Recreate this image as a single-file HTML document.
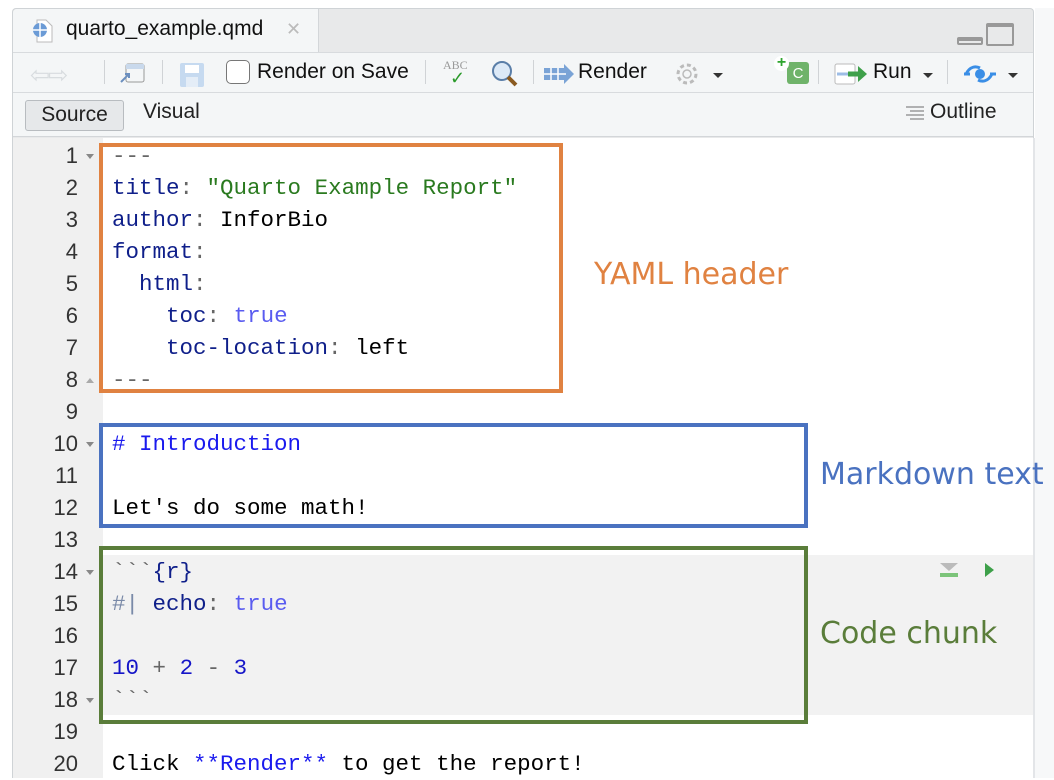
<!DOCTYPE html>
<html><head><meta charset="utf-8"><style>
*{margin:0;padding:0;box-sizing:border-box}
body{width:1054px;height:778px;position:relative;background:#fff;overflow:hidden;font-family:"Liberation Sans",sans-serif}
.a{position:absolute}
.code{position:absolute;left:112px;font-family:"Liberation Mono",monospace;font-size:22.5px;line-height:32px;white-space:pre;color:#000}
.ln{position:absolute;left:20px;width:58px;text-align:right;font-family:"Liberation Sans",sans-serif;font-size:22px;line-height:32px;color:#333}
.k{color:#0f1f8a}.s{color:#2a7a1f}.b{color:#5a5cf0}.h{color:#1a1aee}.g{color:#666}.n{color:#1515c8}
.tb{font-size:21px;color:#111;position:absolute;top:60px}
.sep{position:absolute;top:60px;width:1px;height:24px;background:#d0d3d6}
.fold{position:absolute;left:86px;width:0;height:0;border-left:4px solid transparent;border-right:4px solid transparent;border-top:5px solid #888}
</style></head><body>
<div class="a" style="left:12px;top:8px;width:1022px;height:770px;border:1px solid #cfd3d6;border-bottom:none;background:#e8e9ea;border-radius:4px 4px 0 0"></div>
<div class="a" style="left:13px;top:9px;width:306px;height:44px;background:#f4f6f7;border-right:1px solid #d3d6d9;border-radius:4px 0 0 0"></div>
<svg class="a" style="left:29px;top:18px" width="28" height="26"><path d="M8 2h9l6 6v16H8z" fill="#fff" stroke="#bbb"/><circle cx="11" cy="12" r="7" fill="#6b9bd6"/><path d="M4 12h14M11 5v14" stroke="#fff" stroke-width="1.5"/></svg>
<div class="a" style="left:66px;top:17px;font-size:21px;color:#111">quarto_example.qmd</div>
<div class="a" style="left:286px;top:19px;font-size:18px;color:#bbb">✕</div>
<div class="a" style="left:957px;top:37px;width:26px;height:8px;border:2px solid #999;border-top-width:4px;border-radius:2px"></div>
<div class="a" style="left:986px;top:23px;width:28px;height:23px;border:2px solid #999;border-top-width:4px;border-radius:2px"></div>
<div class="a" style="left:13px;top:52px;width:1020px;height:41px;background:#f4f6f7;border-top:1px solid #d8dbde;border-bottom:1px solid #d8dbde"></div>
<div class="a" style="left:30px;top:61px;font-size:24px;color:#d8dcdf;letter-spacing:-2px">⇦⇨</div>
<div class="sep" style="left:104px"></div>
<svg class="a" style="left:117px;top:62px" width="30" height="24"><rect x="9" y="2" width="18" height="18" rx="2" fill="#f4f6f7" stroke="#999"/><rect x="9" y="2" width="18" height="5" fill="#c9d9ec"/><path d="M4 20l8-8M8 12h4v4" stroke="#6b8fbf" stroke-width="2" fill="none"/></svg>
<div class="sep" style="left:162px"></div>
<svg class="a" style="left:178px;top:61px" width="28" height="28"><rect x="2" y="2" width="24" height="24" rx="2" fill="#c6daf0"/><rect x="7" y="4" width="14" height="8" fill="#fff"/><rect x="8" y="16" width="12" height="10" fill="#e4edf7"/></svg>
<div class="a" style="left:226px;top:60px;width:24px;height:24px;border:1.5px solid #777;border-radius:5px;background:#fff"></div>
<div class="tb" style="left:257px">Render on Save</div>
<div class="sep" style="left:425px"></div>
<div class="a" style="left:443px;top:58px;font-family:'Liberation Serif',serif;font-size:12px;color:#999">ABC</div>
<div class="a" style="left:450px;top:68px;font-size:18px;color:#2a9a2a">✓</div>
<svg class="a" style="left:490px;top:59px" width="30" height="30"><circle cx="12" cy="12" r="9" fill="#dce9f7" stroke="#5a7ea8" stroke-width="2"/><path d="M18 18l8 8" stroke="#8a5a20" stroke-width="4"/></svg>
<div class="sep" style="left:533px"></div>
<svg class="a" style="left:544px;top:62px" width="32" height="24"><rect x="0" y="6" width="22" height="12" fill="#7aa3d6"/><path d="M20 2l10 10-10 10z" fill="#7aa3d6"/><path d="M7 6v12M14 6v12M0 12h22" stroke="#fff" stroke-width="1.5"/></svg>
<div class="tb" style="left:578px">Render</div>
<svg class="a" style="left:673px;top:60px" width="28" height="28"><circle cx="14" cy="14" r="9" fill="none" stroke="#bbb" stroke-width="3" stroke-dasharray="4 3"/><circle cx="14" cy="14" r="4" fill="none" stroke="#bbb" stroke-width="1.5"/></svg>
<div class="a" style="left:713px;top:73px;border-left:5px solid transparent;border-right:5px solid transparent;border-top:5px solid #333"></div>
<div class="a" style="left:787px;top:62px;width:22px;height:22px;background:#6fb36a;border-radius:3px;color:#fff;font-size:15px;text-align:center;line-height:24px">C</div>
<div class="a" style="left:774px;top:56px;width:15px;height:15px;background:#fff;border-radius:50%;color:#2fa52f;font-weight:bold;font-size:16px;line-height:14px;text-align:center">+</div>
<div class="sep" style="left:818px"></div>
<svg class="a" style="left:834px;top:62px" width="38" height="24"><rect x="1" y="2" width="20" height="20" rx="2" fill="#fff" stroke="#bbb"/><path d="M3 12h14" stroke="#9dbde6" stroke-width="3"/><path d="M14 12h12" stroke="#3ea04a" stroke-width="5"/><path d="M24 4l9 8-9 8z" fill="#3ea04a"/></svg>
<div class="tb" style="left:873px">Run</div>
<div class="a" style="left:923px;top:73px;border-left:5px solid transparent;border-right:5px solid transparent;border-top:5px solid #333"></div>
<div class="sep" style="left:947px"></div>
<svg class="a" style="left:962px;top:62px" width="40" height="24"><path d="M4 12c4-8 10-8 14-6M30 12c-4 8-10 8-14 6" stroke="#3a8ee6" stroke-width="3" fill="none"/><circle cx="18" cy="12" r="5" fill="#3a8ee6"/><path d="M2 12h6M28 12h6" stroke="#3a8ee6" stroke-width="3"/></svg>
<div class="a" style="left:1008px;top:73px;border-left:5px solid transparent;border-right:5px solid transparent;border-top:5px solid #333"></div>
<div class="a" style="left:13px;top:93px;width:1020px;height:44px;background:#f4f6f7;border-bottom:1px solid #d3d6d9"></div>
<div class="a" style="left:25px;top:100px;width:99px;height:31px;background:#e6e8ea;border:1px solid #b8bcc0;border-radius:3px;font-size:21px;color:#222;text-align:center;line-height:27px">Source</div>
<div class="a" style="left:143px;top:100px;font-size:21px;color:#222">Visual</div>
<svg class="a" style="left:903px;top:104px" width="22" height="18"><path d="M3 3h18M7 7h14M3 11h18M7 15h14" stroke="#888" stroke-width="1.3"/></svg>
<div class="a" style="left:930px;top:100px;font-size:21px;color:#222">Outline</div>
<div class="a" style="left:13px;top:138px;width:1020px;height:640px;background:#fff"></div>
<div class="a" style="left:13px;top:138px;width:90px;height:640px;background:#f0f0f0"></div>
<div class="a" style="left:103px;top:555px;width:930px;height:160px;background:#f2f2f2"></div>
<div class="a" style="left:1033px;top:138px;width:2px;height:640px;background:#e3e5e8"></div>
<div class="a" style="left:1035px;top:8px;width:19px;height:770px;background:#f7f8f9"></div>

<div class="ln" style="top:140px">1</div><div class="ln" style="top:172px">2</div><div class="ln" style="top:204px">3</div><div class="ln" style="top:236px">4</div><div class="ln" style="top:268px">5</div><div class="ln" style="top:300px">6</div><div class="ln" style="top:332px">7</div><div class="ln" style="top:364px">8</div><div class="ln" style="top:396px">9</div><div class="ln" style="top:428px">10</div><div class="ln" style="top:460px">11</div><div class="ln" style="top:492px">12</div><div class="ln" style="top:524px">13</div><div class="ln" style="top:556px">14</div><div class="ln" style="top:588px">15</div><div class="ln" style="top:620px">16</div><div class="ln" style="top:652px">17</div><div class="ln" style="top:684px">18</div><div class="ln" style="top:716px">19</div><div class="ln" style="top:748px">20</div>
<div class="fold" style="top:154px"></div><div class="fold" style="top:378px;border-top:none;border-bottom:5px solid #aaa"></div><div class="fold" style="top:442px"></div><div class="fold" style="top:570px"></div><div class="fold" style="top:698px"></div>

<div class="code" style="top:140px"><span class="g">---</span></div>
<div class="code" style="top:172px"><span class="k">title</span><span class="g">:</span> <span class="s">"Quarto Example Report"</span></div>
<div class="code" style="top:204px"><span class="k">author</span><span class="g">:</span> InforBio</div>
<div class="code" style="top:236px"><span class="k">format</span><span class="g">:</span></div>
<div class="code" style="top:268px">  <span class="k">html</span><span class="g">:</span></div>
<div class="code" style="top:300px">    <span class="k">toc</span><span class="g">:</span> <span class="b">true</span></div>
<div class="code" style="top:332px">    <span class="k">toc-location</span><span class="g">:</span> left</div>
<div class="code" style="top:364px"><span class="g">---</span></div>
<div class="code" style="top:428px"><span class="h"># Introduction</span></div>
<div class="code" style="top:492px">Let's do some math!</div>
<div class="code" style="top:556px"><span class="g">&#96;&#96;&#96;</span><span class="k">{r}</span></div>
<div class="code" style="top:588px"><span style="color:#7a8aa8">#|</span> <span class="k">echo</span><span class="g">:</span> <span class="b">true</span></div>
<div class="code" style="top:652px"><span class="n">10</span> <span class="g">+</span> <span class="n">2</span> <span class="g">-</span> <span class="n">3</span></div>
<div class="code" style="top:684px"><span class="g">&#96;&#96;&#96;</span></div>
<div class="code" style="top:748px">Click <span class="h">**Render**</span> to get the report!</div>

<div class="a" style="left:940px;top:563px;border-left:9px solid transparent;border-right:9px solid transparent;border-top:8px solid #bbb"></div>
<div class="a" style="left:940px;top:573px;width:18px;height:4px;background:#7cc47a"></div>
<div class="a" style="left:985px;top:563px;border-top:7px solid transparent;border-bottom:7px solid transparent;border-left:9px solid #3ea04a"></div>

<div class="a" style="left:99px;top:143px;width:464px;height:250px;border:4px solid #e08241"></div>
<div class="a" style="left:99px;top:423px;width:709px;height:105px;border:4px solid #4a72c0"></div>
<div class="a" style="left:99px;top:546px;width:709px;height:178px;border:4px solid #5a7d3a"></div>
<div class="a" style="left:594px;top:257px;font-family:'DejaVu Sans',sans-serif;font-size:30px;color:#e08241">YAML header</div>
<div class="a" style="left:820px;top:457px;font-family:'DejaVu Sans',sans-serif;font-size:30px;color:#4a72c0;white-space:nowrap">Markdown text</div>
<div class="a" style="left:820px;top:616px;font-family:'DejaVu Sans',sans-serif;font-size:30px;color:#5a7d3a">Code chunk</div>
</body></html>
